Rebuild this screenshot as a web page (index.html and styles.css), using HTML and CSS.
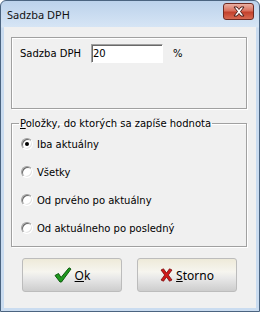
FILE: index.html
```html
<!DOCTYPE html>
<html lang="sk">
<head>
    <meta charset="UTF-8">
    <title>Sadzba DPH</title>
    <link rel="stylesheet" href="styles.css">
</head>
<body>
    <div class="window">
        <div class="titlebar">
            <span class="title">Sadzba DPH</span>
            <span class="close-btn">
                <svg width="14" height="11" viewBox="0 0 14 11">
                    <path d="M2 1 L5 1 L7 3.5 L9 1 L12 1 L8.5 5.5 L12 10 L9 10 L7 7.5 L5 10 L2 10 L5.5 5.5 Z" fill="#fff" stroke="#4a1d18" stroke-width="1" stroke-linejoin="round"/>
                </svg>
            </span>
        </div>
        <div class="content">
            <div class="group rate-group">
                <label class="rate-label" for="rate">Sadzba DPH</label>
                <input type="text" id="rate" class="rate-input" value="20">
                <span class="percent">%</span>
            </div>

            <fieldset class="group items-group">
                <legend><u>P</u>oložky, do ktorých sa zapíše hodnota</legend>
                <div class="radio-row"><span class="radio checked"></span>Iba aktuálny</div>
                <div class="radio-row"><span class="radio"></span>Všetky</div>
                <div class="radio-row"><span class="radio"></span>Od prvého po aktuálny</div>
                <div class="radio-row"><span class="radio"></span>Od aktuálneho po posledný</div>
            </fieldset>

            <div class="buttons">
                <button class="btn">
                    <svg width="18" height="16" viewBox="0 0 18 16">
                        <path d="M1 8.5 L4.5 6.5 L7 10.5 L15 0.8 L17 2 L7.5 15 L6 15 Z" fill="#1f9a1f" stroke="#0d5a0d" stroke-width="1" stroke-linejoin="round"/>
                    </svg>
                    <span><u>O</u>k</span>
                </button>
                <button class="btn">
                    <svg width="13" height="14" viewBox="0 0 13 14">
                        <path d="M1 2 L3.5 0.8 L6.5 5 L9.5 0.8 L12 2 L8.3 7 L12 12 L9.5 13.2 L6.5 9 L3.5 13.2 L1 12 L4.7 7 Z" fill="#d01a1a" stroke="#7a0c0c" stroke-width="0.8" stroke-linejoin="round"/>
                    </svg>
                    <span><u>S</u>torno</span>
                </button>
            </div>
        </div>
    </div>
</body>
</html>
```

FILE: styles.css
```css
body {
    margin: 0;
    background: #fff;
}
.window {
    width: 260px;
    height: 312px;
    box-sizing: border-box;
    border: 1px solid #4b6480;
    border-radius: 6px 6px 0 0;
    padding: 0 3px 3px;
    background: linear-gradient(#bcd2eb, #d6e5f5 26px, #cadcf0 27px);
    display: flex;
    flex-direction: column;
}
.titlebar {
    height: 26px;
    display: flex;
    align-items: center;
    justify-content: space-between;
    padding: 0 2px 0 3px;
}
.title {
    font-family: "Noto Sans", sans-serif;
    font-size: 11px;
    color: #111;
}
.close-btn {
    width: 29px;
    height: 15px;
    margin-top: -5px;
    border: 1px solid #6e2a22;
    border-radius: 3px;
    background: linear-gradient(#eab0a3, #d9705d 45%, #c3412c 55%, #d86a52);
    display: flex;
    align-items: center;
    justify-content: center;
}
.content {
    flex: 1;
    background: #f0f0f0;
    padding: 10px 9px 0 7px;
    font-family: "DejaVu Sans", sans-serif;
    font-size: 10px;
    color: #000;
}
.group {
    border: 1px solid #a0a0a0;
    box-shadow: inset 1px 1px 0 #fff, 1px 1px 0 #fff;
    width: 236px;
    box-sizing: border-box;
}
.rate-group {
    height: 72px;
    padding: 6px 8px 0;
    display: flex;
    align-items: flex-start;
}
.rate-label {
    width: 71px;
    line-height: 19px;
}
.rate-input {
    width: 72px;
    height: 19px;
    box-sizing: border-box;
    margin: 0;
    padding: 0 1px;
    border: 1px solid;
    border-color: #a0a0a0 #fff #fff #a0a0a0;
    box-shadow: inset 1px 1px 0 #696969;
    background: #fff;
    font-family: "DejaVu Sans", sans-serif;
    font-size: 10px;
    outline: none;
}
.percent {
    margin-left: 10px;
    line-height: 19px;
}
.items-group {
    margin: 8px 0 0;
    padding: 0 5px 4px 8px;
    min-width: 0;
}
.items-group legend {
    padding: 0 1px;
    margin-left: -1px;
    line-height: 13px;
}
.radio-row {
    height: 28px;
    display: flex;
    align-items: center;
    gap: 4px;
}
.radio {
    width: 12px;
    height: 12px;
    margin-left: 1px;
    box-sizing: border-box;
    border-radius: 50%;
    border: 1px solid;
    border-color: #a0a0a0 #fff #fff #a0a0a0;
    box-shadow: inset 1px 1px 0 #696969, inset -1px -1px 0 #e3e3e3;
    background: #fff;
    display: flex;
    align-items: center;
    justify-content: center;
}
.radio.checked::after {
    content: "";
    width: 4px;
    height: 4px;
    border-radius: 50%;
    background: #000;
}
.buttons {
    display: flex;
    gap: 15px;
    padding-left: 11px;
    margin-top: 11px;
}
.btn {
    width: 100px;
    height: 34px;
    border: 1px solid #bcbcbc;
    border-radius: 3px;
    background: linear-gradient(#eeead9, #f6f5ef 40%, #e8e8e8 60%, #cdcdcd);
    display: flex;
    align-items: center;
    justify-content: center;
    gap: 3px;
    padding: 0;
    font-family: "Noto Sans", sans-serif;
    font-size: 12px;
    color: #000;
}
```
